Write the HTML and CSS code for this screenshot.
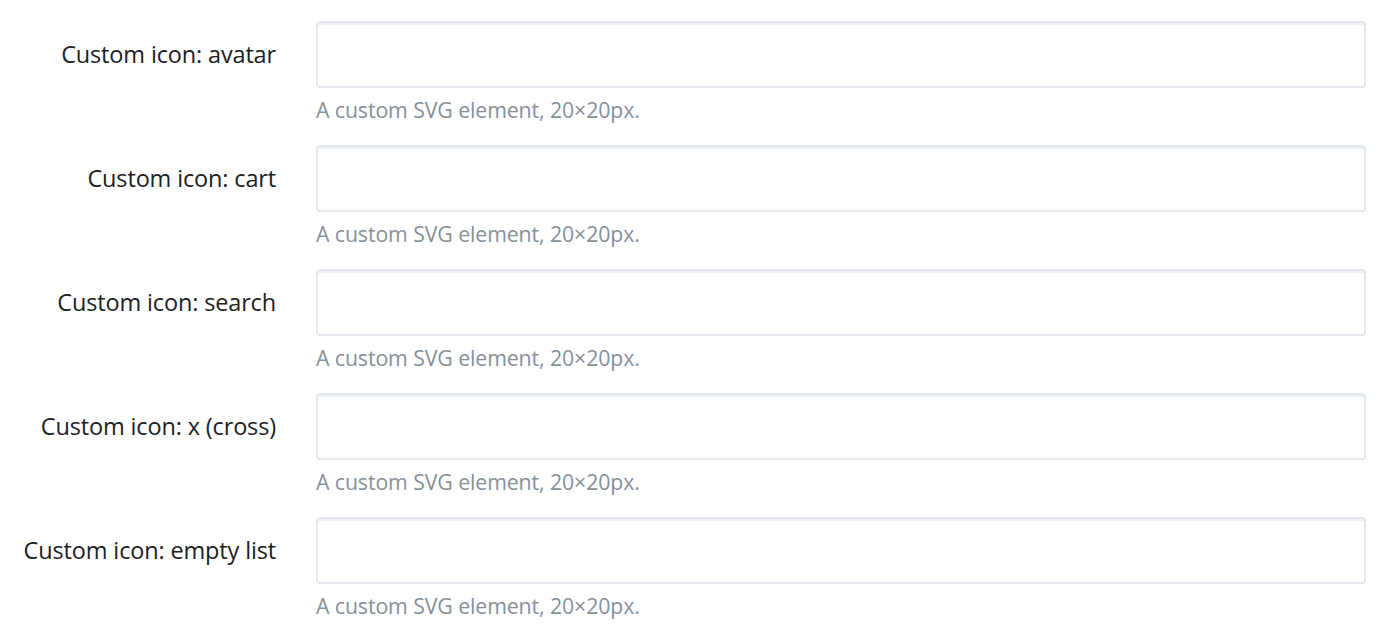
FILE: index.html
```html
<!DOCTYPE html>
<html>
<head>
<meta charset="utf-8">
<link rel="stylesheet" href="styles.css">
</head>
<body>
<form class="form">
  <div class="row">
    <label class="label" for="f1">Custom icon: avatar</label>
    <div class="field">
      <input class="input" id="f1" type="text">
      <p class="help">A custom SVG element, 20×20px.</p>
    </div>
  </div>
  <div class="row">
    <label class="label" for="f2">Custom icon: cart</label>
    <div class="field">
      <input class="input" id="f2" type="text">
      <p class="help">A custom SVG element, 20×20px.</p>
    </div>
  </div>
  <div class="row">
    <label class="label" for="f3">Custom icon: search</label>
    <div class="field">
      <input class="input" id="f3" type="text">
      <p class="help">A custom SVG element, 20×20px.</p>
    </div>
  </div>
  <div class="row">
    <label class="label" for="f4">Custom icon: x (cross)</label>
    <div class="field">
      <input class="input" id="f4" type="text">
      <p class="help">A custom SVG element, 20×20px.</p>
    </div>
  </div>
  <div class="row">
    <label class="label" for="f5">Custom icon: empty list</label>
    <div class="field">
      <input class="input" id="f5" type="text">
      <p class="help">A custom SVG element, 20×20px.</p>
    </div>
  </div>
</form>
</body>
</html>
```

FILE: styles.css
```css
html, body {
  margin: 0;
  padding: 0;
  background: #ffffff;
}
body {
  font-family: "Open Sans", Lato, "Liberation Sans", sans-serif;
  color: #1f2326;
}
.form {
  padding: 21px 22px 0 0;
}
.row {
  display: grid;
  grid-template-columns: 276px 1fr;
  column-gap: 40px;
  height: 101px;
  margin-bottom: 23px;
}
.label {
  height: 67px;
  display: flex;
  align-items: center;
  justify-content: flex-end;
  font-size: 23.5px;
  line-height: 28px;
  padding-bottom: 2px;
  box-sizing: border-box;
  color: #1d2124;
  letter-spacing: -0.15px;
}
.field {
  display: flex;
  flex-direction: column;
}
.input {
  box-sizing: border-box;
  height: 67px;
  flex: none;
  width: 100%;
  margin: 0;
  border: 2px solid #e2e8ee;
  border-radius: 4px;
  box-shadow: inset 0 2px 0 #edf1f5;
  background: #ffffff;
  font-size: 20px;
  outline: none;
}
.help {
  margin: 10px 0 0 0;
  height: 24px;
  font-size: 21.3px;
  line-height: 24px;
  color: #87909a;
  letter-spacing: -0.1px;
  white-space: nowrap;
}
```
